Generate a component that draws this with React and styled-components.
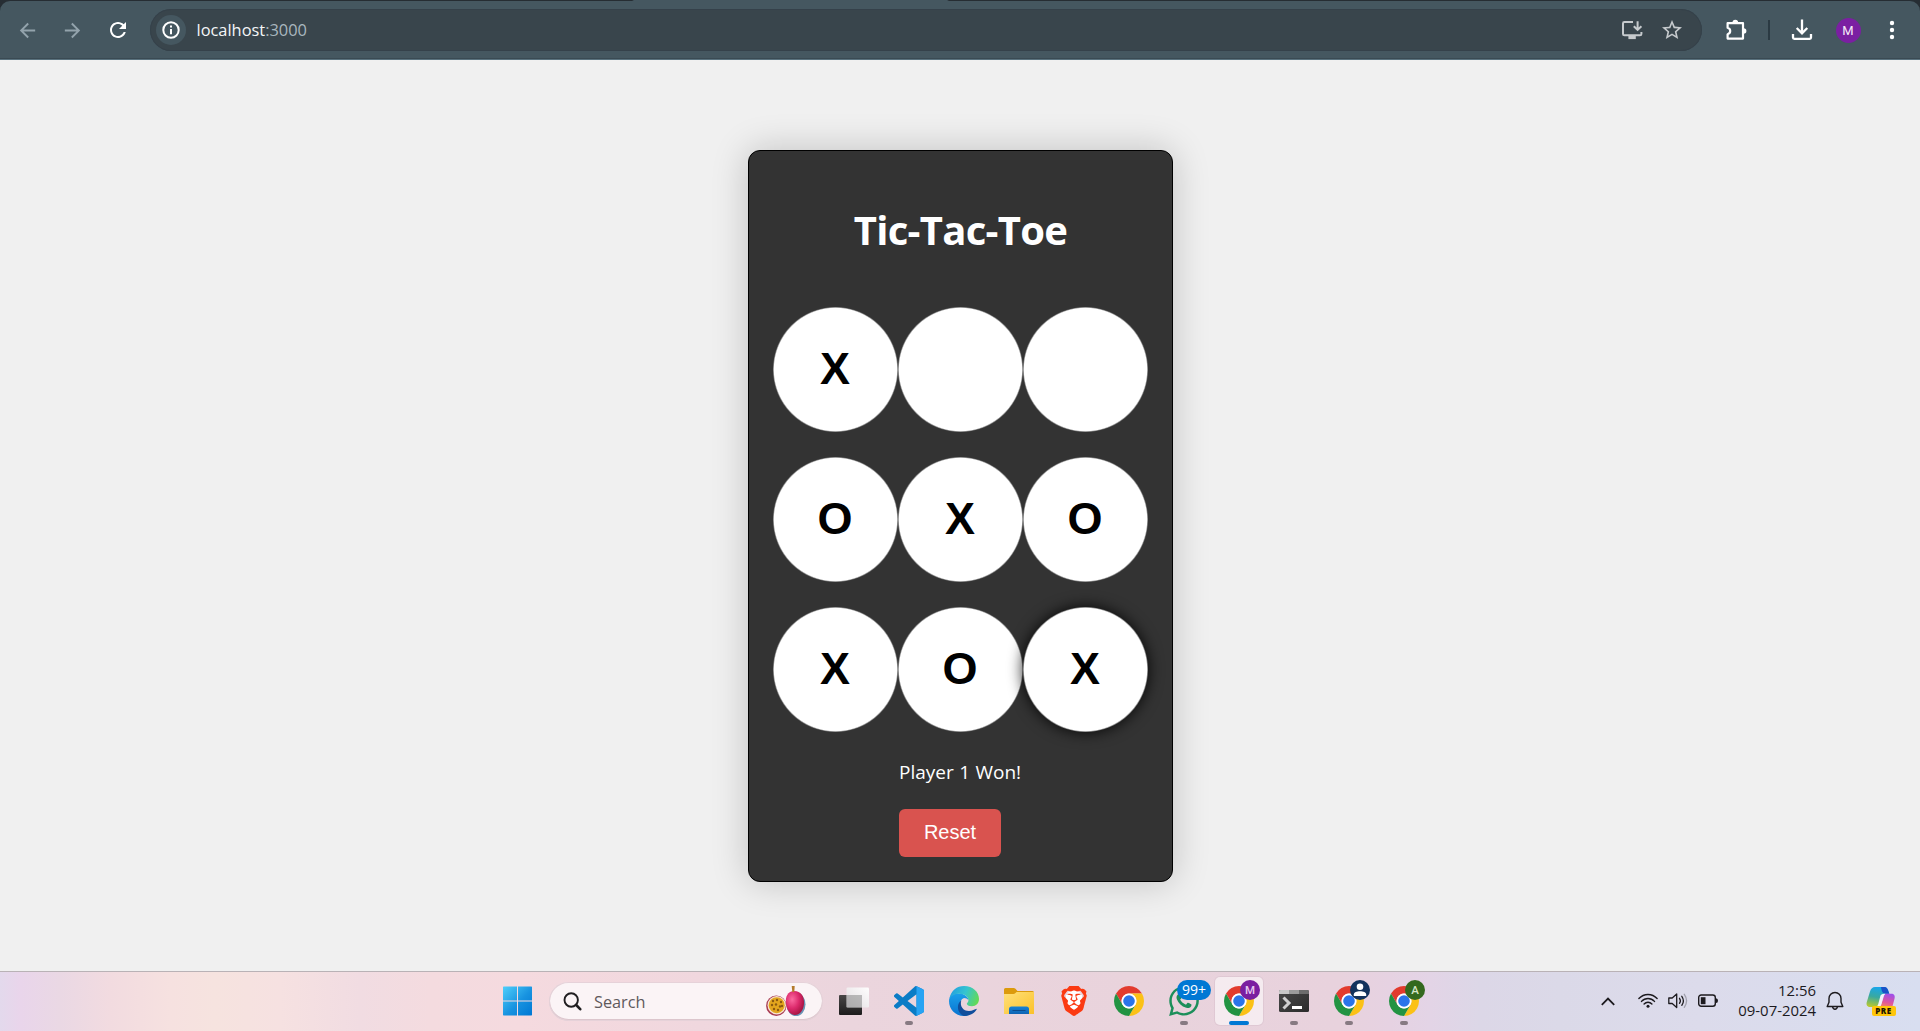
import React from 'react';
import styled, { createGlobalStyle, css } from 'styled-components';
import { FaWhatsapp } from 'react-icons/fa';
import { SiBrave } from 'react-icons/si';

const ui = "'Open Sans', 'Noto Sans', sans-serif";

const GlobalStyle = createGlobalStyle`
  *, *::before, *::after { box-sizing: border-box; }
  body { margin: 0; background: #f0f0f0; font-family: ${ui}; overflow: hidden; }
  svg { display: block; }
  button { font: inherit; }
`;

const Screen = styled.div`
  display: flex;
  flex-direction: column;
  width: 100%;
  height: 1031px;
`;

/* ---------- browser chrome ---------- */

const TabStrip = styled.div`
  height: 60px;
  flex: none;
  display: flex;
  flex-direction: column;
  background: linear-gradient(90deg, #262d33 632px, #455760 634px, #455760 947px, #262d33 949px);
  padding-top: 1px;
`;

const Toolbar = styled.nav`
  flex: 1;
  display: flex;
  align-items: center;
  padding: 0 8px 1px 5px;
  background: #455760;
  border-radius: 10px 10px 0 0;
  box-shadow: inset 0 -1px 0 #5a727e, inset 0 -2px 0 #3a4a53;
`;

const Slot = styled.div`
  width: ${(p) => p.$w}px;
  flex: none;
  display: flex;
  align-items: center;
  justify-content: center;
  color: ${(p) => p.$color || '#ffffff'};
`;

const Omnibox = styled.div`
  flex: 1;
  height: 42px;
  margin: 0 12px 0 10px;
  padding: 0 10px 0 6px;
  display: flex;
  align-items: center;
  background: #39454c;
  border-radius: 21px;
  box-shadow: inset 0 0 0 1px #35414a;
`;

const SiteInfo = styled.div`
  width: 30px;
  height: 30px;
  border-radius: 50%;
  background: #455760;
  display: grid;
  place-items: center;
`;

const Address = styled.div`
  flex: 1;
  margin-left: 10.5px;
  font-size: 16.4px;
  line-height: 24px;
  color: #f4f6f7;
  span { color: #a9b7bf; }
`;

const Divider = styled.div`
  width: 2px;
  height: 20px;
  background: #2b3a43;
`;

const Avatar = styled.div`
  width: 25px;
  height: 25px;
  border-radius: 50%;
  background: #7b1fa2;
  color: #f5e8f8;
  display: grid;
  place-items: center;
  font: 13px/25px Roboto, sans-serif;
`;

/* ---------- game ---------- */

const Page = styled.main`
  flex: 1;
  display: flex;
  justify-content: center;
  align-items: flex-start;
  padding: 90px 0 0 1px;
  background: #f0f0f0;
`;

const Card = styled.section`
  width: 425px;
  height: 732px;
  display: flex;
  flex-direction: column;
  align-items: center;
  padding: 24px;
  background: #333333;
  border: 1px solid #000000;
  border-radius: 12px;
  box-shadow: 0 0 37px rgba(0, 0, 0, 0.2);
`;

const Title = styled.h1`
  margin: 28px 0 51px;
  font-size: 40px;
  line-height: 53px;
  font-weight: 700;
  letter-spacing: -0.7px;
  color: #ffffff;
`;

const Board = styled.div`
  display: grid;
  grid-template-columns: repeat(3, 125px);
  row-gap: 25px;
`;

const Cell = styled.button`
  width: 125px;
  height: 125px;
  padding: 0 1px 3px 0;
  border: 0;
  border-radius: 50%;
  background: radial-gradient(circle closest-side, #ffffff 61.2px, #777777 62.4px);
  color: #000000;
  font: 700 45px/1 'Liberation Sans', Arial, sans-serif;
  ${(p) => p.$hovered && css`
    box-shadow: 0 0 15px rgba(0, 0, 0, 0.9);
  `}
`;

const Footer = styled.div`
  display: flex;
  flex-direction: column;
  align-items: flex-start;
`;

const Status = styled.p`
  margin: 27px 0 23px;
  width: 123px;
  font-size: 19px;
  line-height: 27px;
  word-spacing: 0.5px;
  color: #ffffff;
  white-space: nowrap;
`;

const Reset = styled.button`
  width: 102px;
  height: 48px;
  padding: 0 0 2px;
  border: 0;
  border-radius: 6px;
  background: #d9534f;
  color: #ffffff;
  font: 20px/1 'Liberation Sans', Arial, sans-serif;
`;

/* ---------- taskbar ---------- */

const Taskbar = styled.footer`
  height: 60px;
  flex: none;
  display: flex;
  align-items: center;
  padding: 0 13px 1px 489px;
  border-top: 1px solid #b9b2b6;
  background: linear-gradient(90deg,
    #e3d9ec 0, #e9d5eb 20px, #ead8e4 60px, #f2dbe0 110px, #f6e1e0 170px, #f6e3df 215px,
    #f6e1e1 280px, #f1dce2 360px, #f4dbdf 430px, #f5dadf 520px, #f0d7de 700px, #ebd5dd 850px,
    #e9d3dc 1130px, #e8d2dd 1340px, #e6d2e2 1390px, #e3d4e6 1430px, #dcd7e7 1480px, #dbd9e8 1560px,
    #dcdbeb 1700px, #d8def0 1920px);
`;

const TaskSlot = styled.div`
  position: relative;
  width: 55px;
  height: 58px;
  flex: none;
  display: flex;
  align-items: center;
  justify-content: flex-start;
  padding-left: 5px;
`;

const Tile = styled.div`
  width: 48px;
  height: 48px;
  border-radius: 5px;
  display: grid;
  place-items: center;
  ${(p) => p.$active && css`
    background: rgba(255, 255, 255, 0.55);
    box-shadow: 0 0 0 1px rgba(150, 120, 140, 0.1);
  `}
`;

const Indicator = styled.span`
  position: absolute;
  left: 29px;
  bottom: 5px;
  width: ${(p) => (p.$active ? 20 : 8)}px;
  height: 4px;
  border-radius: 2px;
  transform: translateX(-50%);
  background: ${(p) => (p.$active ? '#0078d4' : '#877a82')};
`;

const ProfileBadge = styled.span`
  position: absolute;
  left: 30px;
  top: 8px;
  width: 20px;
  height: 20px;
  border-radius: 50%;
  overflow: hidden;
  background: ${(p) => p.$bg};
  color: ${(p) => p.$fg};
  display: grid;
  place-items: center;
  font: 500 11.5px/20px Roboto, sans-serif;
`;

const CountBadge = styled.span`
  position: absolute;
  left: 22px;
  top: 8px;
  width: 34px;
  height: 20px;
  border-radius: 10px;
  background: #0078d4;
  color: #ffffff;
  text-align: center;
  font-size: 14px;
  line-height: 20px;
`;

const SearchBox = styled.div`
  width: 274px;
  height: 39px;
  margin: 0 2px 0 5px;
  padding: 0 17px 0 14px;
  flex: none;
  display: flex;
  align-items: center;
  border-radius: 20px;
  background: #fbf4f6;
  box-shadow: inset 0 0 0 1px #e6d2d9, inset 0 -1px 0 1px #dcc6cd;
`;

const SearchLabel = styled.span`
  flex: 1;
  margin: 1px 0 0 12px;
  font-size: 16.3px;
  line-height: 24px;
  color: #5f595c;
`;

const Tray = styled.div`
  margin-left: auto;
  display: flex;
  align-items: center;
  color: #1c1a1e;
`;

const Clock = styled.time`
  display: flex;
  flex-direction: column;
  align-items: flex-end;
  width: 88px;
  margin: 0 0 3px 5px;
  font-size: 14.9px;
  line-height: 20px;
  color: #1c1a1e;
`;

/* ---------- icons ---------- */

const Glyph = ({ d, size = 24, box = 24 }) => (
  <svg width={size} height={size} viewBox={`0 0 ${box} ${box}`} fill="currentColor"><path d={d} /></svg>
);

const InfoIcon = () => (
  <svg width="20" height="20" viewBox="0 0 20 20" fill="none" stroke="#fff" strokeWidth="2">
    <circle cx="10" cy="10" r="7.7" />
    <path d="M10 9v5.2M10 5.6v2" />
  </svg>
);

const InstallIcon = () => (
  <svg width="22" height="20" viewBox="0 0 22 20" fill="none" stroke="currentColor" strokeWidth="2">
    <path d="M12 2H3.4Q2 2 2 3.4V14q0 1.3 1.4 1.3H19q1.4 0 1.4-1.3V12" />
    <path d="M16.6 1.2v8M12.8 6.2l3.8 3.7 3.8-3.7" />
    <path d="M7.4 17.5h7.4" strokeWidth="3.2" />
  </svg>
);

const PuzzleIcon = () => (
  <svg width="22" height="22" viewBox="0 0 22 22">
    <path d="M2.6 4.2H18v15.400H2.600v-4.400q2.600-.8 2.600-3.200T2.600 8.800z" fill="none" stroke="#fff" strokeWidth="2.200" strokeLinejoin="round" />
    <path d="M7.500 3.600a2.800 2.800 0 0 1 5.600 0zM18.600 9.200a2.800 2.800 0 0 1 0 5.600z" fill="#fff" />
  </svg>
);

const DownloadIcon = () => (
  <svg width="22" height="22" viewBox="0 0 22 22" fill="none" stroke="#fff" strokeWidth="2.3">
    <path d="M11 .6v13M5.7 9l5.3 5.3L16.3 9M2 15v3.6q0 1.3 1.3 1.3h15.4q1.3 0 1.3-1.3V15" />
  </svg>
);

const DotsIcon = () => (
  <svg width="6" height="20" viewBox="0 0 6 20" fill="#fff">
    <circle cx="3" cy="3" r="2.2" /><circle cx="3" cy="10" r="2.2" /><circle cx="3" cy="17" r="2.2" />
  </svg>
);

const WindowsLogo = () => (
  <svg width="30" height="30" viewBox="0 0 30 30">
    <defs>
      <linearGradient id="win" gradientUnits="userSpaceOnUse" x1="0" y1="0" x2="29" y2="29">
        <stop offset="0" stopColor="#4fd0fb" /><stop offset=".55" stopColor="#1893e0" /><stop offset="1" stopColor="#0078d4" />
      </linearGradient>
    </defs>
    <path fill="url(#win)" d="M.5.5H14v14H0V1zM15 .5h13.500l.5.5v13.500H15zM0 15.500h14v14H.5L0 29zM15 15.500h14V29l-.5.5H15z" />
  </svg>
);

const SearchIcon = () => (
  <svg width="19" height="19" viewBox="0 0 19 19" fill="none" stroke="#201e20" strokeLinecap="round">
    <circle cx="8.2" cy="8" r="6.7" strokeWidth="1.9" />
    <path d="M13.2 13l4 4.2" strokeWidth="2.6" />
  </svg>
);

const FruitIcon = () => (
  <svg width="40" height="32" viewBox="0 0 40 32">
    <defs>
      <radialGradient id="plum" cx=".35" cy=".35" r=".75">
        <stop offset="0" stopColor="#fb6aa0" /><stop offset=".5" stopColor="#dc2a6c" /><stop offset="1" stopColor="#9c1038" />
      </radialGradient>
    </defs>
    <ellipse cx="30" cy="19.300" rx="9.500" ry="11.800" fill="#6a94b5" />
    <path d="M28.500 6C21.500 6 19 12 20 19c1 7 4.500 11 9 11s8.500-4.500 9-11C38.500 11 34.500 6 28.500 6z" fill="url(#plum)" />
    <path d="M25.700 1h3l-.4 6h-2z" fill="#b47b2c" />
    <circle cx="10.300" cy="20.700" r="10.200" fill="#a83a52" />
    <circle cx="10.700" cy="20.200" r="9.200" fill="#f7e4cf" />
    <circle cx="10.700" cy="20.200" r="8" fill="#e3a51e" />
    {[[7, 16], [11, 15], [15, 17], [6, 20], [10, 19.5], [14, 21.5], [8, 24], [12, 25], [16, 21]].map(([x, y]) => (
      <circle key={`${x}-${y}`} cx={x} cy={y} r="1.2" fill="#8c5a10" />
    ))}
  </svg>
);

const TaskViewIcon = () => (
  <svg width="30" height="30" viewBox="0 0 30 30">
    <defs>
      <linearGradient id="tvd" x1="0" y1="0" x2="0" y2="1"><stop offset="0" stopColor="#484646" /><stop offset="1" stopColor="#1d1c1c" /></linearGradient>
      <linearGradient id="tvl" x1="1" y1="0" x2="0" y2="1"><stop offset="0" stopColor="#fff" stopOpacity=".95" /><stop offset="1" stopColor="#e2e0e2" stopOpacity=".9" /></linearGradient>
    </defs>
    <rect x="0" y="9" width="23" height="20" rx="1" fill="url(#tvd)" />
    <rect x="7.5" y="1.5" width="22.5" height="20" rx="1.2" fill="url(#tvl)" />
    <path d="M7.500 9H23v12.500H7.500z" fill="#8a8a8a" opacity=".5" />
  </svg>
);

const CodeIcon = () => (
  <svg width="30" height="30" viewBox="0 0 24 24">
    <path fill="#0a7cc6" d="M23.150 2.587L18.210.210a1.494 1.494 0 0 0-1.705.290l-9.460 8.630-4.120-3.128a.999.999 0 0 0-1.276.057L.327 7.261A1 1 0 0 0 .326 8.740L3.899 12 .326 15.260a1 1 0 0 0 .001 1.479L1.650 17.940a.999.999 0 0 0 1.276.057l4.120-3.128 9.460 8.630a1.492 1.492 0 0 0 1.704.290l4.942-2.377A1.500 1.500 0 0 0 24 20.060V3.939a1.500 1.500 0 0 0-.850-1.352zm-5.146 14.861L10.826 12l7.178-5.448v10.896z" />
    <path fill="#27a3f3" d="M18 .2l5.150 2.387A1.500 1.500 0 0 1 24 3.939V20.060a1.500 1.500 0 0 1-.85 1.352L18 23.800z" />
  </svg>
);

const EdgeIcon = () => (
  <svg width="30" height="30" viewBox="0 0 30 30">
    <defs>
      <linearGradient id="eg" x1="0" y1=".3" x2="1" y2=".6"><stop offset="0" stopColor="#239fe0" /><stop offset=".5" stopColor="#34c4d0" /><stop offset="1" stopColor="#62da55" /></linearGradient>
      <linearGradient id="eb" x1="0" y1="0" x2="0" y2="1"><stop offset="0" stopColor="#1aa0ea" /><stop offset="1" stopColor="#0a73d0" /></linearGradient>
    </defs>
    <path fill="url(#eb)" d="M0 15C0 10 4 7.500 9.500 7.500c6 0 10 3.500 10 7-1-1.800-2.800-2.500-4.500-2.500-3 1-4 4-4 6C11 24 15 28 19 29.400c-1.500.5-3 .6-4 .6C6 30 0 23 0 15z" />
    <path fill="#104e9c" d="M12.300 14.500C10.500 20 14 25 20 25c3.500 0 5.500-1.600 8-2.200C26 27 21 30 15 30 10.500 28 8.500 24 9 20c.3-2.600 1.500-4.500 3.300-5.500z" />
    <path fill="url(#eg)" d="M.4 12.500C2 4.500 8 0 15 0c9 0 15 6 15 13 0 4.500-3 7.200-7 7.200-3.500 0-5.200-1.500-5.200-2.500 0-.8 1.700-1.500 1.700-3.500 0-3.700-4.500-6.500-9.500-6.500C6 7.700 2.500 9.500.4 12.500z" />
  </svg>
);

const FolderIcon = () => (
  <svg width="30" height="30" viewBox="0 0 30 30">
    <defs>
      <linearGradient id="fo" x1="0" y1="0" x2="1" y2="1"><stop offset="0" stopColor="#ffe07a" /><stop offset="1" stopColor="#fbc12a" /></linearGradient>
      <linearGradient id="fb" x1="0" y1="0" x2="0" y2="1"><stop offset="0" stopColor="#1583d8" /><stop offset="1" stopColor="#0f63b2" /></linearGradient>
    </defs>
    <path d="M0 3.500Q0 2 1.500 2h8.300q.8 0 1.400.6L13.500 5H28.500Q30 5 30 6.500V12H0z" fill="#dc9a0c" />
    <path d="M0 8h9.500q1 0 1.700-.8L12.500 6H30v21.500q0 .5-.5.500H.5Q0 28 0 27.500z" fill="url(#fo)" />
    <path d="M5 28v-5q0-2.500 2.500-2.500h15q2.500 0 2.500 2.500v5z" fill="url(#fb)" />
    <path d="M8.500 24.500h13" stroke="#0b4b8c" strokeWidth="1" />
  </svg>
);

const BraveHolder = styled.div`
  display: grid;
  place-items: center;
  color: #fb3a12;
  background: radial-gradient(ellipse 9px 11px at 50% 50%, #ffffff 98%, transparent);
`;

const ChromeIcon = () => (
  <svg width="30" height="30" viewBox="0 0 48 48">
    <path fill="#e23b2e" d="M24 12h20.780A24 24 0 0 0 3.220 12L13.610 30A12 12 0 0 1 24 12" />
    <path fill="#fbc116" d="M24 12h20.780A24 24 0 0 1 24 48l10.390-18A12 12 0 0 0 24 12" />
    <path fill="#229342" d="M34.390 30L24 48A24 24 0 0 1 3.220 12l10.390 18a12 12 0 0 0 20.780 0" />
    <circle cx="24" cy="24" r="12" fill="#fff" />
    <circle cx="24" cy="24" r="9.3" fill="#2a74ea" />
  </svg>
);

const TerminalIcon = () => (
  <svg width="30" height="30" viewBox="0 0 30 30">
    <defs><linearGradient id="tm" x1="0" y1="0" x2="1" y2="1"><stop offset="0" stopColor="#4a4a4a" /><stop offset="1" stopColor="#2b2b2b" /></linearGradient></defs>
    <rect y="4" width="30" height="22" rx="1.5" fill="url(#tm)" />
    <path d="M0 8V5.500Q0 4 1.500 4H10v4z" fill="#c9c9c9" /><path d="M10 4h10v4H10z" fill="#9b9b9b" /><path d="M20 4h8.500Q30 4 30 5.500V8H20z" fill="#6c6c6c" />
    <path d="M4.500 11.500l5.500 5.500-5.500 5.500" fill="none" stroke="#d0d0d0" strokeWidth="3" />
    <path d="M13 21.500h10" stroke="#fff" strokeWidth="3" />
  </svg>
);

const PersonIcon = () => (
  <svg width="20" height="20" viewBox="0 0 20 20" fill="#fff">
    <circle cx="10" cy="6.8" r="3.3" /><path d="M3.800 16v-1.500c0-2.300 3-3.300 6.200-3.300s6.200 1 6.200 3.300V16z" />
  </svg>
);

const WifiIcon = () => (
  <svg width="20" height="16" viewBox="0 0 20 16" fill="none" stroke="currentColor" strokeWidth="1.4" strokeLinecap="round">
    <path d="M.9 5.600c5-5.400 13.200-5.400 18.200 0M3.500 8.400c3.600-3.900 9.400-3.900 13 0M6.100 11c2.200-2.300 5.600-2.300 7.800 0" />
    <circle cx="10" cy="13.3" r="1.5" fill="currentColor" stroke="none" />
  </svg>
);

const SpeakerIcon = () => (
  <svg width="20" height="18" viewBox="0 0 20 18" fill="none" stroke="currentColor" strokeWidth="1.3" strokeLinejoin="round" strokeLinecap="round">
    <path d="M.8 6v5.500h3.400L8.700 15.500V2L4.200 6z" />
    <path d="M11.500 6.300q1.800 2.500 0 5M13.800 4.300q3.200 4.500 0 9" />
    <path d="M16.300 2.300q4.600 6.500 0 13" opacity=".3" />
  </svg>
);

const BatteryIcon = () => (
  <svg width="20" height="14" viewBox="0 0 20 14">
    <rect x=".7" y="1" width="16.6" height="11.3" rx="2.5" fill="none" stroke="currentColor" strokeWidth="1.4" />
    <rect x="2.8" y="3.2" width="4.7" height="7" fill="currentColor" />
    <path d="M18 4.300q2 .3 2 2.400t-2 2.400z" fill="currentColor" />
  </svg>
);

const ChevronIcon = () => (
  <svg width="14" height="9" viewBox="0 0 14 9" fill="none" stroke="currentColor" strokeWidth="1.8"><path d="M.8 7.800L7 1.600l6.200 6.200" /></svg>
);

const BellIcon = () => (
  <svg width="18" height="20" viewBox="0 0 18 20" fill="none" stroke="currentColor" strokeWidth="1.4" strokeLinejoin="round">
    <path d="M9 1.500C5.500 1.500 3 4.200 3 7.500v3.800L1.200 15.500h15.600L15 11.300V7.500c0-3.300-2.500-6-6-6zM6.500 15.700c.3 1.700 1.300 2.500 2.500 2.500s2.200-.8 2.500-2.500" />
  </svg>
);

const CopilotWrap = styled.div`
  position: relative;
  width: 30px;
  height: 30px;
`;

const PreTag = styled.span`
  position: absolute;
  left: 6px;
  top: 20px;
  width: 24px;
  height: 10px;
  border-radius: 2px;
  background: #ffc60a;
  color: #1c1600;
  text-align: center;
  font: 800 8px/10px ${ui};
  letter-spacing: 0.6px;
`;

const CopilotIcon = () => (
  <CopilotWrap>
    <svg width="30" height="30" viewBox="0 0 30 30">
      <defs>
        <linearGradient id="cl" x1=".5" y1="0" x2=".3" y2="1"><stop offset="0" stopColor="#18a6ec" /><stop offset=".5" stopColor="#39a9a0" /><stop offset="1" stopColor="#b9c92e" /></linearGradient>
        <linearGradient id="cr" x1=".6" y1="0" x2=".3" y2="1"><stop offset="0" stopColor="#a04fe8" /><stop offset=".6" stopColor="#e0569c" /><stop offset="1" stopColor="#f58a56" /></linearGradient>
      </defs>
      <path d="M9 1h9.500c2 0 3 1.500 3.500 3l1.300 3.800h-3.800c-2.500 0-3.500 1.500-4.200 3.500l-2 6c-.6 1.900-1.600 3.700-4 3.700H4C1 21 0 18.500.8 16L4 5.500C5 2.500 6.500 1 9 1z" fill="url(#cl)" />
      <path d="M15 1h3.500c2 0 3 1.500 3.500 3l1.300 3.800h-4c-2.300 0-3.300-2-3.800-4z" fill="#1a52c8" />
      <path d="M19.500 7.800h6c2.800 0 3.800 2.200 3 5l-2.300 8.700h-14c2 0 2.700-1.400 3.300-3.500l2-6.500c.5-1.700.8-3 2-3.700z" fill="url(#cr)" />
      <path d="M14.500 9.500q1-1.700 3.500-1.700h1.500q-1.500.6-2.100 2.700L15.300 18q-.8 3-3.300 3.500H9q2.500-.5 3.200-3.300z" fill="#f3f2fb" />
    </svg>
    <PreTag>PRE</PreTag>
  </CopilotWrap>
);

const BACK = 'M20 11H7.830l5.590-5.590L12 4l-8 8 8 8 1.410-1.410L7.830 13H20v-2z';
const FORWARD = 'M4 11h12.170l-5.590-5.590L12 4l8 8-8 8-1.410-1.410L16.170 13H4v-2z';
const RELOAD = 'M17.650 6.350C16.200 4.900 14.210 4 12 4c-4.420 0-7.990 3.580-7.990 8s3.570 8 7.990 8c3.730 0 6.840-2.550 7.730-6h-2.080c-.820 2.330-3.040 4-5.650 4-3.310 0-6-2.690-6-6s2.690-6 6-6c1.660 0 3.140.690 4.220 1.780L13 11h7V4l-2.350 2.350z';
const STAR = 'M22 9.240l-7.190-.620L12 2 9.190 8.630 2 9.240l5.460 4.730L5.820 21 12 17.270 18.180 21l-1.630-7.030L22 9.240zM12 15.400l-3.760 2.270 1-4.280-3.320-2.880 4.380-.380L12 6.100l1.710 4.040 4.380.380-3.320 2.880 1 4.280L12 15.400z';

const INK = '#1c1a1e';

const App = () => {
  const board = ['X', '', '', 'O', 'X', 'O', 'X', 'O', 'X'];
  const apps = [
    { name: 'taskview', icon: <TaskViewIcon /> },
    { name: 'code', icon: <CodeIcon />, running: true },
    { name: 'edge', icon: <EdgeIcon /> },
    { name: 'files', icon: <FolderIcon /> },
    { name: 'brave', icon: <BraveHolder><SiBrave size={30} /></BraveHolder> },
    { name: 'chrome', icon: <ChromeIcon /> },
    { name: 'whatsapp', icon: <FaWhatsapp size={34} color="#1c8f5a" />, running: true, badge: <CountBadge>99+</CountBadge> },
    { name: 'chrome-m', icon: <ChromeIcon />, running: true, active: true, badge: <ProfileBadge $bg="#7a1fa0" $fg="#e6c8ee">M</ProfileBadge> },
    { name: 'terminal', icon: <TerminalIcon />, running: true },
    { name: 'chrome-guest', icon: <ChromeIcon />, running: true, badge: <ProfileBadge $bg="#12325c" $fg="#fff"><PersonIcon /></ProfileBadge> },
    { name: 'chrome-a', icon: <ChromeIcon />, running: true, badge: <ProfileBadge $bg="#33691e" $fg="#d5e6c8">A</ProfileBadge> },
  ];

  return (
    <Screen>
      <GlobalStyle />
      <TabStrip>
        <Toolbar>
          <Slot $w={45} $color="#93a3ac"><Glyph d={BACK} size={23} /></Slot>
          <Slot $w={45} $color="#93a3ac"><Glyph d={FORWARD} size={23} /></Slot>
          <Slot $w={45}><Glyph d={RELOAD} size={24} /></Slot>
          <Omnibox>
            <SiteInfo><InfoIcon /></SiteInfo>
            <Address>localhost<span>:3000</span></Address>
            <Slot $w={40} $color="#c6cacd"><InstallIcon /></Slot>
            <Slot $w={40} $color="#c6cacd"><Glyph d={STAR} size={24} /></Slot>
          </Omnibox>
          <Slot $w={44}><PuzzleIcon /></Slot>
          <Slot $w={22}><Divider /></Slot>
          <Slot $w={44}><DownloadIcon /></Slot>
          <Slot $w={48}><Avatar>M</Avatar></Slot>
          <Slot $w={40}><DotsIcon /></Slot>
        </Toolbar>
      </TabStrip>

      <Page>
        <Card>
          <Title>Tic-Tac-Toe</Title>
          <Board>
            {board.map((mark, i) => <Cell key={i} $hovered={i === 8}>{mark}</Cell>)}
          </Board>
          <Footer>
            <Status>Player 1 Won!</Status>
            <Reset>Reset</Reset>
          </Footer>
        </Card>
      </Page>

      <Taskbar>
        <TaskSlot><Tile><WindowsLogo /></Tile></TaskSlot>
        <SearchBox>
          <SearchIcon />
          <SearchLabel>Search</SearchLabel>
          <FruitIcon />
        </SearchBox>
        {apps.map((a) => (
          <TaskSlot key={a.name}>
            <Tile $active={a.active}>{a.icon}</Tile>
            {a.badge}
            {a.running && <Indicator $active={a.active} />}
          </TaskSlot>
        ))}
        <Tray>
          <Slot $w={50} $color={INK}><ChevronIcon /></Slot>
          <Slot $w={30} $color={INK}><WifiIcon /></Slot>
          <Slot $w={30} $color={INK}><SpeakerIcon /></Slot>
          <Slot $w={30} $color={INK}><BatteryIcon /></Slot>
          <Clock><span>12:56</span><span>09-07-2024</span></Clock>
          <Slot $w={38} $color={INK}><BellIcon /></Slot>
          <Slot $w={53}><CopilotIcon /></Slot>
        </Tray>
      </Taskbar>
    </Screen>
  );
};

export default App;
